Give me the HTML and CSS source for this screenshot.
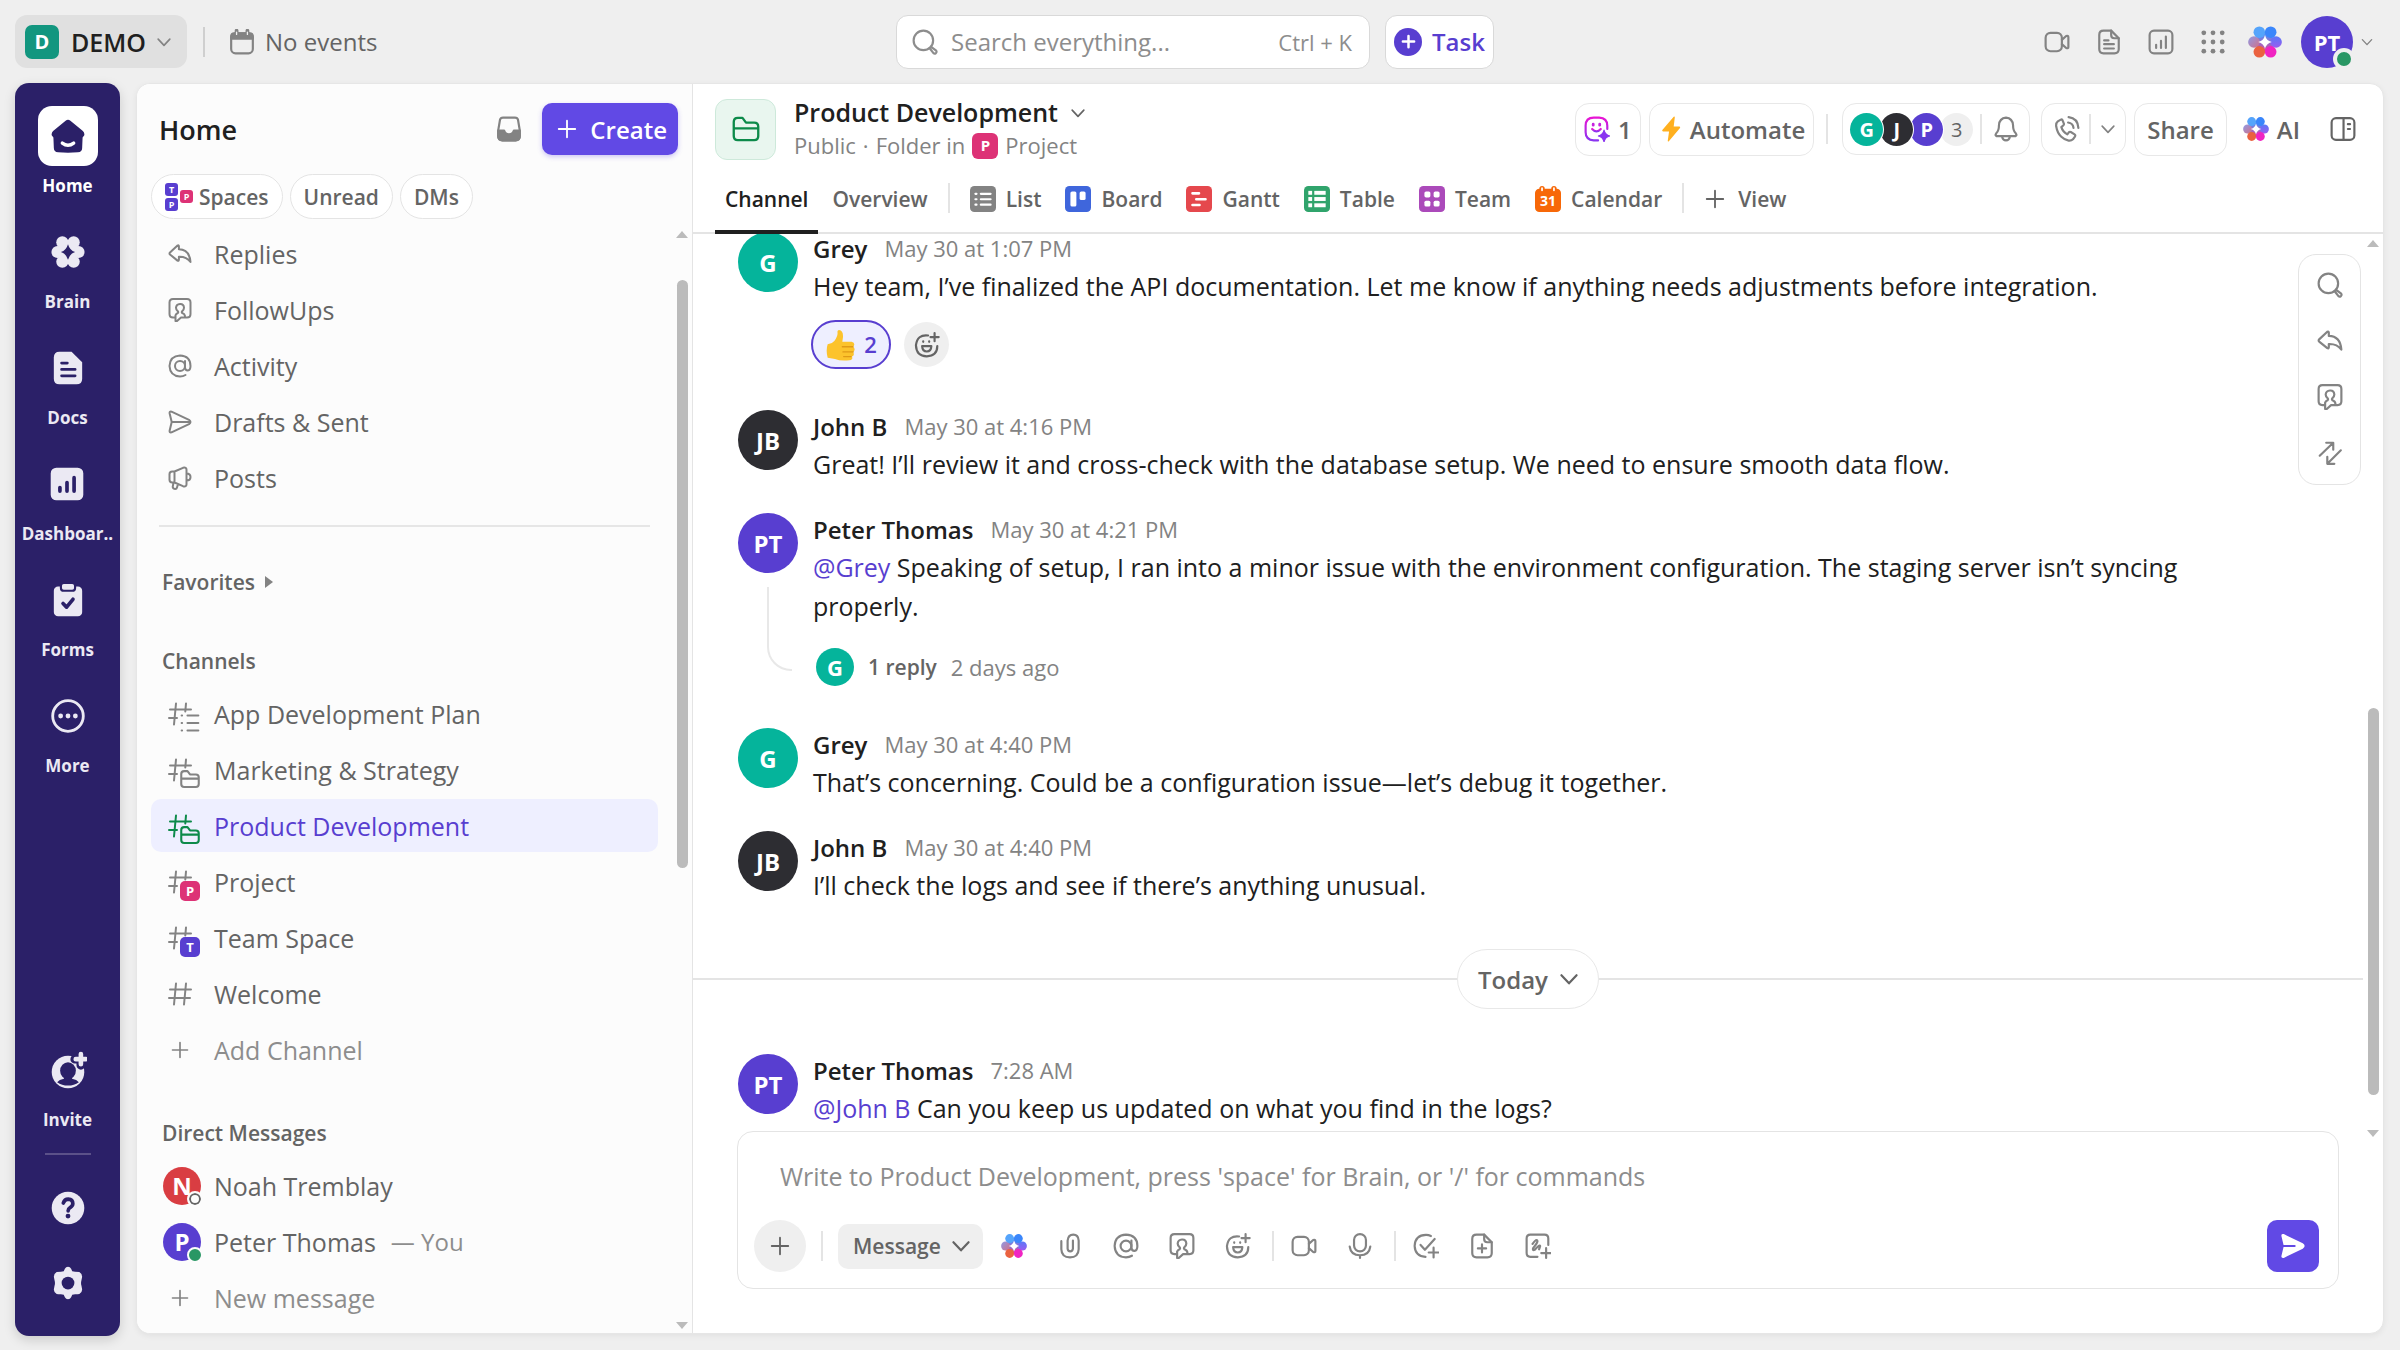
FILE: index.html
```
<!DOCTYPE html>
<html lang="en">
<head>
    <meta charset="UTF-8">
    <meta name="viewport" content="width=device-width, initial-scale=1.0">
    <title>Product Development | DEMO</title>
    <link rel="stylesheet" href="styles.css">
</head>
<body>
    <!-- Icon sprite -->
    <svg class="sprite" aria-hidden="true">
        <defs>
            <linearGradient id="agent-grad" x1="0" y1="0" x2="0" y2="1">
                <stop offset="0" stop-color="#e815d4"/>
                <stop offset="1" stop-color="#8a35f0"/>
            </linearGradient>
            <linearGradient id="petal-left" x1="0" y1="0" x2="1" y2="1">
                <stop offset="0" stop-color="#8f9be6"/>
                <stop offset="1" stop-color="#d0708a"/>
            </linearGradient>
            <linearGradient id="petal-right" x1="0" y1="0" x2="0" y2="1">
                <stop offset="0" stop-color="#5a78f8"/>
                <stop offset="1" stop-color="#9a5cf0"/>
            </linearGradient>
            <linearGradient id="petal-mid" x1="0" y1="0" x2="0" y2="1">
                <stop offset="0" stop-color="#4a95fc"/>
                <stop offset="1" stop-color="#d84a9c"/>
            </linearGradient>
        </defs>
        <symbol id="i-chevron" viewBox="0 0 24 24"><path d="M5 8.500l7 7.500 7-7.500"/></symbol>
        <symbol id="i-plus" viewBox="0 0 24 24"><path d="M12 3v18M3 12h18"/></symbol>
        <symbol id="i-calendar" viewBox="0 0 24 24"><rect x="2" y="4" width="20" height="18.500" rx="4"/><path d="M2 9V7q0-3 3-3h14q3 0 3 3v2z" fill="currentColor"/><path d="M7 1.500v4M17 1.500v4" stroke-width="3.500"/><path d="M7 3v2M17 3v2" stroke="#efefef" stroke-width="1.200"/></symbol>
        <symbol id="i-search" viewBox="0 0 24 24"><circle cx="10.500" cy="10.500" r="9"/><path d="M17 17.500l1-.8 4.300 3.300q.8 1.200-.2 2.200-1.200 1-2.300.1L16.500 18"/></symbol>
        <symbol id="i-video" viewBox="0 0 24 24"><rect x="1.500" y="3.500" width="15" height="17" rx="4.500"/><path d="M16.500 10l4-3.500q2-.8 2 1v9q0 1.800-2 1l-4-3.500"/></symbol>
        <symbol id="i-doc" viewBox="0 0 24 24"><path d="M14 1.500H7Q3 1.500 3 5.500v13q0 4 4 4h10q4 0 4-4V8.500z"/><path d="M14 1.500v4q0 3 3 3h4M7.500 10.500h4M7.500 14h9M7.500 18h9"/></symbol>
        <symbol id="i-chart" viewBox="0 0 24 24"><rect x="1.500" y="1.500" width="21" height="21" rx="4"/><path d="M7.500 14.500v3M12 11v6.500M16.500 7v10.500"/></symbol>
        <symbol id="i-dots" viewBox="0 0 24 24"><g fill="currentColor" stroke="none"><circle cx="3.500" cy="3.500" r="2.200"/><circle cx="12" cy="3.500" r="2.200"/><circle cx="20.500" cy="3.500" r="2.200"/><circle cx="3.500" cy="12" r="2.200"/><circle cx="12" cy="12" r="2.200"/><circle cx="20.500" cy="12" r="2.200"/><circle cx="3.500" cy="20.500" r="2.200"/><circle cx="12" cy="20.500" r="2.200"/><circle cx="20.500" cy="20.500" r="2.200"/></g></symbol>
        <symbol id="i-brain" viewBox="0 0 24 24"><g stroke="none"><circle cx="12" cy="12" r="6.500" fill="url(#petal-mid)"/><circle cx="4.200" cy="12" r="4.100" fill="url(#petal-left)"/><circle cx="19.800" cy="12" r="4.100" fill="url(#petal-right)"/><circle cx="8" cy="18.900" r="4.100" fill="#ea6240"/><circle cx="16" cy="18.900" r="4.100" fill="#f024c2"/><circle cx="8" cy="5.100" r="4.100" fill="#55a4fb"/><circle cx="16" cy="5.100" r="4.100" fill="#3a86fb"/><path d="M12 7q.8 4 4.800 5-4 1-4.800 5-.8-4-4.800-5 4-1 4.800-5z" fill="#fff"/></g></symbol>
        <symbol id="i-brain-solid" viewBox="0 0 24 24"><g fill="currentColor" stroke="none"><circle cx="4.600" cy="12" r="4.300"/><circle cx="19.400" cy="12" r="4.300"/><circle cx="8" cy="18.900" r="4.300"/><circle cx="16" cy="18.900" r="4.300"/><circle cx="8" cy="5.100" r="4.300"/><circle cx="16" cy="5.100" r="4.300"/><circle cx="12" cy="12" r="6.500"/><path d="M12 6.500q1.200 4.300 5 5.500-3.800 1.200-5 5.500-1.200-4.300-5-5.500 3.800-1.200 5-5.500z" fill="#2b2068"/></g></symbol>
        <symbol id="i-home" viewBox="0 0 24 24"><path d="M10.300 1.200q1.700-1.200 3.400 0l8.800 7.300q1.300 1.200 1 3l-1.200 1.500-.3 7.500q0 2.800-3 3-7 .6-14 0-3-.2-3-3L1.700 13l-1.200-1.500q-.3-1.800 1-3z" fill="currentColor" stroke="none"/><path d="M8 17q4 3 8 0" stroke="#fff" stroke-width="2.400"/></symbol>
        <symbol id="i-doc-solid" viewBox="0 0 24 24"><path d="M6 .5h8.500L22 8v11.500q0 4-4 4H6q-4 0-4-4v-15q0-4 4-4z" fill="currentColor" stroke="none"/><path d="M7.500 8.500h4M7.500 13h9.500M7.500 17.500h9.500" stroke="#2b2068"/></symbol>
        <symbol id="i-chart-solid" viewBox="0 0 24 24"><rect x=".5" y=".5" width="23" height="23" rx="4" fill="currentColor" stroke="none"/><path d="M7 14.500V17M12 11v6M17 7.500V17" stroke="#2b2068" stroke-width="2.600"/></symbol>
        <symbol id="i-form" viewBox="0 0 24 24"><rect x="2" y="2.500" width="20" height="21" rx="3" fill="currentColor" stroke="none"/><rect x="7" y="0" width="10" height="5.500" rx="2" fill="currentColor" stroke="#2b2068" stroke-width="1.500"/><path d="M8.500 14.500l2.500 2.500 4.500-5.500" stroke="#2b2068" stroke-width="2.600"/></symbol>
        <symbol id="i-more" viewBox="0 0 24 24"><circle cx="12" cy="12" r="10.800"/><g fill="currentColor" stroke="none"><circle cx="6.800" cy="12" r="1.700"/><circle cx="12" cy="12" r="1.700"/><circle cx="17.200" cy="12" r="1.700"/></g></symbol>
        <symbol id="i-invite" viewBox="0 0 28 28"><circle cx="14" cy="15.500" r="12" fill="currentColor" stroke="none"/><ellipse cx="14" cy="14.500" rx="5.800" ry="6.300" fill="#2b2068" stroke="none"/><path d="M11 18.500h6v2q3.500.5 5 2.500-3.500 2.500-8 2.500T6 23q1.500-2 5-2.500z" fill="#2b2068" stroke="none"/><path d="M23.500 1.500v9M19 6h9" stroke="#2b2068" stroke-width="6.500"/><path d="M23.500 2.200v7.600M19.700 6h7.600" stroke-width="3.400"/></symbol>
        <symbol id="i-help" viewBox="0 0 24 24"><circle cx="12" cy="12" r="11.500" fill="currentColor" stroke="none"/><path d="M8.700 8.500q.8-2.800 3.500-2.800 3.200.2 3.200 3.100 0 1.700-1.700 2.700-1.600 1-1.600 2.500" stroke="#2b2068" stroke-width="2.600"/><circle cx="12" cy="17.700" r="1.700" fill="#2b2068" stroke="none"/></symbol>
        <symbol id="i-gear" viewBox="0 0 24 24"><path d="M12 .5q1.500 0 2.200 1.500l.8 1.700 2 .3q2 0 3 .3 2 1.200 2 3.200l-.5 2.500q-.6 2 0 4l.5 2.500q0 2-2 3.200-1 .3-3 .3l-2 .3-.8 1.700Q13.500 23.500 12 23.500T9.800 22L9 20.300 7 20q-2 0-3-.3-2-1.200-2-3.200l.5-2.500q.6-2 0-4L2 7.500q0-2 2-3.200Q5 4 7 4l2-.3.800-1.700Q10.500.5 12 .5z" fill="currentColor" stroke="none"/><circle cx="12" cy="12" r="4.500" fill="#2b2068" stroke="none"/></symbol>
        <symbol id="i-inbox" viewBox="0 0 24 24"><path d="M6.500 1.500h11q2.300 0 2.800 2l1.700 10v5q0 4-4 4H6q-4 0-4-4v-5l1.700-10q.5-2 2.800-2z"/><path d="M2 13.500h5.500q1 3.500 4.500 3.500t4.500-3.500H22v5q0 4-4 4H6q-4 0-4-4z" fill="currentColor"/></symbol>
        <symbol id="i-reply" viewBox="0 0 24 24"><path d="M9.500 3.500q1.300-.8 1.400.8v3q10.600.2 11.600 12.700-4-5.500-11.600-5.200v3q-.1 1.600-1.400.8L2 12.500q-1-1 0-2z"/></symbol>
        <symbol id="i-follow" viewBox="0 0 24 24"><path d="M6.500 19.500H5q-3.500 0-3.500-3.500V4.500Q1.500 1 5 1h14q3.500 0 3.500 3.500V16q0 3.500-3.500 3.500h-6L8.500 23.500q-1 .3-1-.8v-5.500q.5-1.500 2.300-2.200.8-.8 0-1.800Q8 11.500 8 9.700 8.300 6.200 12 6t4 3.700q0 1.800-1.800 3.500-.8 1 0 1.800 2.500.8 2.800 3"/></symbol>
        <symbol id="i-at" viewBox="0 0 24 24"><circle cx="12" cy="12" r="5"/><path d="M17 7v6.500q.2 3 2.800 3 2.700-.3 2.700-4.500Q22.500 2 12 1.500 2 2 1.500 12 2 22 12 22.500q3 0 5.500-1.500"/></symbol>
        <symbol id="i-send" viewBox="0 0 24 24"><path d="M3.500 1.700L21 9.800q3 2.200 0 4.400L3.500 22.300q-2.200.5-1.900-1.500L3.700 12 1.600 3.200q-.3-2 1.900-1.500zM4 12h17"/></symbol>
        <symbol id="i-posts" viewBox="0 0 24 24"><path d="M6.500 5.500L15 1.800q3.500-1 3.500 2v14.400q0 3-3.500 2L6.500 16.500H4.200q-2.700 0-2.700-2.700V8.200q0-2.700 2.700-2.700zM6.500 5.500v11M18.500 7.500q4 0 4 3.500t-4 3.500M5.500 16.500l-.8 4.500q.5 2 2.500 2 1.500 0 1.800-1.500l1-3.500"/></symbol>
        <symbol id="i-hash" viewBox="0 0 24 24"><path d="M8 1.500L6 22.500M18 1.500l-2 21M2 7.500h21M1 16h21"/></symbol>
        <symbol id="i-hash-cut" viewBox="0 0 24 24"><path d="M8 1.500L6 22.500M18 1.500l-.7 8M2 7.500h21M1 16h8"/></symbol>
        <symbol id="i-folder" viewBox="0 0 24 24"><path d="M5 2.500h4l3 4h7q3.500 0 3.500 3.500v8q0 3.500-3.500 3.500H5Q1.500 21.500 1.500 18V6q0-3.500 3.500-3.500zM1.500 11.500h21"/></symbol>
        <symbol id="i-lines" viewBox="0 0 24 24"><path d="M2 3h.5M9 3h13M2 12h.5M9 12h13M2 21h.5M9 21h13"/></symbol>
        <symbol id="i-agent" viewBox="0 0 24 24"><g stroke="url(#agent-grad)"><path d="M13 22.500H9q-7.500-.5-7.500-7.500V9Q1.500 1.500 9 1.500h5q7.500.3 7.500 7.500v3"/><path d="M7.500 12q4 4.500 8 0" /></g><path d="M8.500 7.500v1M14.500 7.500v1" stroke="#c622e0" stroke-width="2.600"/><path d="M18.500 13q1 4.300 5.300 5.500-4.300 1-5.300 5.500-1-4.500-5.300-5.500 4.300-1.200 5.300-5.500z" fill="#8a35f0" stroke="#8a35f0" stroke-width="1"/></symbol>
        <symbol id="i-bolt" viewBox="0 0 24 24"><path d="M14.500.8L4 13q-.6 1 .6 1.200h5.600L9 22.800q0 1.200 1 .4L20.300 11q.8-1-.6-1.200h-5.200l1-8.500q0-1.200-1-.5z" fill="#ffb01f" stroke="none"/></symbol>
        <symbol id="i-bell" viewBox="0 0 24 24"><path d="M12 1.500Q6 2 5.500 8.500q0 5-2.500 7.500-1.200 1.500 0 2.500h18q1.200-1 0-2.500-2.500-2.500-2.500-7.500Q18 2 12 1.500zM8.500 19.500q.5 3 3.500 3t3.500-3"/></symbol>
        <symbol id="i-call" viewBox="0 0 24 24"><path d="M6.300 3.300L3.500 5Q1.700 6.500 2 9.500q1 6 4.500 9.500 3 3 7 3.700 2.500.3 4-1.200l1.800-2.500q.8-1.200-.3-2l-3.500-2.200q-1-.5-1.800.3L12.300 17Q8 14.500 6.800 10.300l1.900-1.800q.8-.8.3-1.800L7.800 3.800q-.6-1-1.500-.5zM13.500 1q8.500 1 9 10M13 6q4.500.5 5 5"/></symbol>
        <symbol id="i-panel" viewBox="0 0 24 24"><rect x="1.500" y="2" width="21" height="20" rx="4"/><path d="M12.500 2v20M16.500 7.500h2M16.500 12h2"/></symbol>
        <symbol id="i-emoji" viewBox="0 0 24 24"><path d="M13 3.200q-10-1.200-11.200 9 .3 10 10 10.300 9.700-.5 9.700-9.500M7.500 13h8.500q-.2 5-4.200 5t-4.300-5zM8.500 8.500v.6M14 8.500v.6M19 1v7.500M15.200 4.700h7.600"/></symbol>
        <symbol id="i-swap" viewBox="0 0 24 24"><path d="M2.500 14.500L14.500 3M8.500 2.500H15v6.500M22 9.500L10 21.500M9.500 15.500V22H16"/></symbol>
        <symbol id="i-clip" viewBox="0 0 24 24"><path d="M4 7.500V15q.3 7.500 8 7.500t8-7.500V7Q19.700 1.500 15 1.500T9.800 7v7.500q.2 2.500 2.400 2.500t2.500-2.500V7"/></symbol>
        <symbol id="i-mic" viewBox="0 0 24 24"><rect x="6.500" y="1" width="11" height="16" rx="5.500"/><path d="M2.500 12.500q1 8 9.500 8t9.500-8M12 20.500V23"/></symbol>
        <symbol id="i-task-add" viewBox="0 0 24 24"><path d="M11.500 22q-9.500-.5-10-10Q2 2 12 1.800q2.500 0 4.500 1M7 11l4 4.500L20 5.500M19 13.500v9M14.500 18h9"/></symbol>
        <symbol id="i-doc-add" viewBox="0 0 24 24"><path d="M14 1.500H7Q3 1.500 3 5.500v13q0 4 4 4h10q4 0 4-4V8.500z"/><path d="M14 1.500v4q0 3 3 3h4M12 10.500v7.500M8.200 14.200h7.600"/></symbol>
        <symbol id="i-board-add" viewBox="0 0 24 24"><path d="M11.500 22H5q-3.500 0-3.500-3.500V5Q1.500 1.500 5 1.500h13q3.500 0 3.500 3.500v6M7 10q4-5.500 4.500-2.500-.2 2-4 6.500-.7 2.500 1.500 1.500 4.500-5 5-3.500-.5 2-1 3M19.500 14v9M15 18.500h9"/></symbol>
        <symbol id="v-list" viewBox="0 0 24 24"><rect width="24" height="24" rx="4" fill="#838383" stroke="none"/><path d="M5 7.200h1M10 7.200h9M5 12.200h1M10 12.200h9M5 17.200h1M10 17.200h9" stroke="#fff"/></symbol>
        <symbol id="v-board" viewBox="0 0 24 24"><rect width="24" height="24" rx="4" fill="#3f66dc" stroke="none"/><rect x="5" y="5" width="5.500" height="14" rx="1.500" fill="#fff" stroke="none"/><rect x="13.500" y="5" width="5.500" height="8" rx="1.500" fill="#fff" stroke="none"/></symbol>
        <symbol id="v-gantt" viewBox="0 0 24 24"><rect width="24" height="24" rx="4" fill="#e5484d" stroke="none"/><path d="M6 6.800h6M9.500 12.200H18M6 17.500h6.500" stroke="#fff" stroke-width="2.400"/></symbol>
        <symbol id="v-table" viewBox="0 0 24 24"><rect width="24" height="24" rx="4" fill="#30a46c" stroke="none"/><g fill="#fff" stroke="none"><rect x="4" y="4.500" width="3.500" height="3.600"/><rect x="9.500" y="4.500" width="10.500" height="3.600"/><rect x="4" y="10.200" width="3.500" height="3.600"/><rect x="9.500" y="10.200" width="10.500" height="3.600"/><rect x="4" y="16" width="3.500" height="3.600"/><rect x="9.500" y="16" width="10.500" height="3.600"/></g></symbol>
        <symbol id="v-team" viewBox="0 0 24 24"><rect width="24" height="24" rx="4" fill="#ab4aba" stroke="none"/><g fill="#fff" stroke="none"><rect x="5" y="5" width="5.500" height="5.500" rx="1.500"/><rect x="13.500" y="5" width="5.500" height="5.500" rx="1.500"/><rect x="5" y="13.500" width="5.500" height="5.500" rx="1.500"/><rect x="13.500" y="13.500" width="5.500" height="5.500" rx="1.500"/></g></symbol>
        <symbol id="v-calendar" viewBox="0 0 24 24"><rect y="2.500" width="24" height="21.500" rx="4" fill="#f76808" stroke="none"/><path d="M6.500 2.500v2M17.500 2.500v2" stroke="#f76808" stroke-width="5"/><path d="M6.500 2v2M17.500 2v2" stroke="#fff" stroke-width="1.600"/></symbol>
        <symbol id="i-thumb" viewBox="0 0 24 24"><g stroke="none"><path d="M10.500.8q3.200.2 3 5.200l-.5 3.500h7q2 .3 2 2.200-.1 1.100-1 1.600 1.300.7 1.200 2.200-.2 1.300-1.300 1.700.9.700.7 1.900-.3 1.300-1.500 1.600.6.700.3 1.600-.6 1.200-2.200 1.200-7 .6-10.700-1L2 21.500Q.5 16 2 11.500q3.500-.5 5-2.500 3-4.200 2.300-7 .2-1.200 1.200-1.200z" fill="#fcc32c"/><path d="M13 13.300h8M13.500 17.200h7.700M14 20.700h5.500" stroke="#e09a16" stroke-width="1"/></g></symbol>
    </svg>

    <!-- Top bar -->
    <header class="topbar">
        <div class="topbar-left">
            <button class="workspace" type="button">
                <span class="square square-teal">D</span>
                DEMO
                <svg class="icon icon-sm"><use href="#i-chevron"/></svg>
            </button>
            <span class="vline"></span>
            <a class="events" href="#"><svg class="icon"><use href="#i-calendar"/></svg>No events</a>
        </div>
        <div class="topbar-center">
            <label class="search">
                <svg class="icon"><use href="#i-search"/></svg>
                <input type="text" placeholder="Search everything..." aria-label="Search everything">
                <kbd>Ctrl + K</kbd>
            </label>
            <button class="task-btn" type="button"><span class="task-plus"><svg class="icon"><use href="#i-plus"/></svg></span>Task</button>
        </div>
        <div class="topbar-right">
            <button class="icon-btn" type="button" aria-label="Clips"><svg class="icon"><use href="#i-video"/></svg></button>
            <button class="icon-btn" type="button" aria-label="Notepad"><svg class="icon"><use href="#i-doc"/></svg></button>
            <button class="icon-btn" type="button" aria-label="Reports"><svg class="icon"><use href="#i-chart"/></svg></button>
            <button class="icon-btn" type="button" aria-label="Apps"><svg class="icon"><use href="#i-dots"/></svg></button>
            <button class="icon-btn" type="button" aria-label="Brain"><svg class="icon icon-xl"><use href="#i-brain"/></svg></button>
            <button class="profile" type="button">
                <span class="avatar avatar-top purple">PT<i class="status online"></i></span>
                <svg class="icon icon-xs"><use href="#i-chevron"/></svg>
            </button>
        </div>
    </header>

    <div class="layout">
        <!-- Icon rail -->
        <nav class="rail">
            <a class="rail-item current" href="#"><span class="rail-icon"><svg class="icon"><use href="#i-home"/></svg></span>Home</a>
            <a class="rail-item" href="#"><span class="rail-icon"><svg class="icon"><use href="#i-brain-solid"/></svg></span>Brain</a>
            <a class="rail-item" href="#"><span class="rail-icon"><svg class="icon"><use href="#i-doc-solid"/></svg></span>Docs</a>
            <a class="rail-item" href="#"><span class="rail-icon"><svg class="icon"><use href="#i-chart-solid"/></svg></span>Dashboar..</a>
            <a class="rail-item" href="#"><span class="rail-icon"><svg class="icon"><use href="#i-form"/></svg></span>Forms</a>
            <a class="rail-item" href="#"><span class="rail-icon"><svg class="icon"><use href="#i-more"/></svg></span>More</a>
            <div class="rail-bottom">
                <a class="rail-item" href="#"><span class="rail-icon"><svg class="icon icon-invite"><use href="#i-invite"/></svg></span>Invite</a>
                <span class="rail-line"></span>
                <a class="rail-link" href="#" aria-label="Help"><svg class="icon"><use href="#i-help"/></svg></a>
                <a class="rail-link" href="#" aria-label="Settings"><svg class="icon"><use href="#i-gear"/></svg></a>
            </div>
        </nav>

        <div class="panel">
            <!-- Sidebar -->
            <aside class="sidebar">
                <div class="sidebar-head">
                    <h1>Home</h1>
                    <button class="icon-btn" type="button" aria-label="Inbox"><svg class="icon"><use href="#i-inbox"/></svg></button>
                    <button class="create-btn" type="button"><svg class="icon"><use href="#i-plus"/></svg>Create</button>
                </div>
                <div class="pills">
                    <button class="pill" type="button">
                        <span class="space-tiles"><i class="tile purple">T</i><i class="tile pink">P</i><i class="tile purple">P</i></span>
                        Spaces
                    </button>
                    <button class="pill" type="button">Unread</button>
                    <button class="pill" type="button">DMs</button>
                </div>
                <div class="sidebar-scroll">
                    <div class="sidebar-content">
                        <nav class="rows">
                            <a class="row" href="#"><span class="row-icon"><svg class="icon"><use href="#i-reply"/></svg></span>Replies</a>
                            <a class="row" href="#"><span class="row-icon"><svg class="icon"><use href="#i-follow"/></svg></span>FollowUps</a>
                            <a class="row" href="#"><span class="row-icon"><svg class="icon"><use href="#i-at"/></svg></span>Activity</a>
                            <a class="row" href="#"><span class="row-icon"><svg class="icon"><use href="#i-send"/></svg></span>Drafts &amp; Sent</a>
                            <a class="row" href="#"><span class="row-icon"><svg class="icon"><use href="#i-posts"/></svg></span>Posts</a>
                        </nav>
                        <hr>
                        <h2 class="group">Favorites <i class="caret"></i></h2>

                        <h2 class="group">Channels</h2>
                        <nav class="rows">
                            <a class="row" href="#"><span class="row-icon"><svg class="icon"><use href="#i-hash-cut"/></svg><svg class="icon corner"><use href="#i-lines"/></svg></span>App Development Plan</a>
                            <a class="row" href="#"><span class="row-icon"><svg class="icon"><use href="#i-hash-cut"/></svg><svg class="icon corner"><use href="#i-folder"/></svg></span>Marketing &amp; Strategy</a>
                            <a class="row active" href="#"><span class="row-icon green-icon"><svg class="icon"><use href="#i-hash-cut"/></svg><svg class="icon corner"><use href="#i-folder"/></svg></span>Product Development</a>
                            <a class="row" href="#"><span class="row-icon"><svg class="icon"><use href="#i-hash-cut"/></svg><i class="corner badge pink">P</i></span>Project</a>
                            <a class="row" href="#"><span class="row-icon"><svg class="icon"><use href="#i-hash-cut"/></svg><i class="corner badge purple">T</i></span>Team Space</a>
                            <a class="row" href="#"><span class="row-icon"><svg class="icon"><use href="#i-hash"/></svg></span>Welcome</a>
                            <a class="row muted" href="#"><span class="row-icon"><svg class="icon icon-sm"><use href="#i-plus"/></svg></span>Add Channel</a>
                        </nav>

                        <h2 class="group">Direct Messages</h2>
                        <nav class="rows">
                            <a class="row" href="#"><span class="row-icon"><span class="avatar avatar-sm red">N<i class="status offline"></i></span></span>Noah Tremblay</a>
                            <a class="row" href="#"><span class="row-icon"><span class="avatar avatar-sm purple">P<i class="status online"></i></span></span>Peter Thomas <span class="you">— You</span></a>
                            <a class="row muted" href="#"><span class="row-icon"><svg class="icon icon-sm"><use href="#i-plus"/></svg></span>New message</a>
                        </nav>
                    </div>
                    <div class="scrollbar scrollbar-side">
                        <i class="arrow-up"></i>
                        <i class="before"></i>
                        <i class="thumb"></i>
                        <i class="after"></i>
                        <i class="arrow-down"></i>
                    </div>
                </div>
            </aside>

            <!-- Channel -->
            <main class="channel">
                <header class="channel-head">
                    <span class="folder-tile"><svg class="icon"><use href="#i-folder"/></svg></span>
                    <div class="channel-title">
                        <h2>Product Development <svg class="icon icon-sm"><use href="#i-chevron"/></svg></h2>
                        <p>Public <span class="dot">·</span> Folder in <i class="square square-pink">P</i> <a href="#">Project</a></p>
                    </div>
                    <div class="channel-tools">
                        <button class="tool" type="button"><svg class="icon"><use href="#i-agent"/></svg>1</button>
                        <button class="tool" type="button"><svg class="icon icon-bolt"><use href="#i-bolt"/></svg>Automate</button>
                        <span class="vline"></span>
                        <div class="tool-group people">
                            <button class="stack" type="button">
                                <span class="avatar avatar-md teal">G</span>
                                <span class="avatar avatar-md dark">J</span>
                                <span class="avatar avatar-md purple">P</span>
                                <span class="avatar avatar-md count">3</span>
                            </button>
                            <span class="vline"></span>
                            <button type="button" aria-label="Notifications"><svg class="icon"><use href="#i-bell"/></svg></button>
                        </div>
                        <div class="tool-group call">
                            <button type="button" aria-label="Call"><svg class="icon"><use href="#i-call"/></svg></button>
                            <span class="vline"></span>
                            <button type="button" aria-label="Call options"><svg class="icon icon-sm"><use href="#i-chevron"/></svg></button>
                        </div>
                        <button class="tool share" type="button">Share</button>
                        <button class="tool plain" type="button"><svg class="icon"><use href="#i-brain"/></svg>AI</button>
                        <button class="tool plain" type="button" aria-label="Side panel"><svg class="icon"><use href="#i-panel"/></svg></button>
                    </div>
                </header>

                <nav class="tabs">
                    <a class="tab selected" href="#">Channel</a>
                    <a class="tab" href="#">Overview</a>
                    <span class="vline"></span>
                    <a class="tab" href="#"><svg class="icon"><use href="#v-list"/></svg>List</a>
                    <a class="tab" href="#"><svg class="icon"><use href="#v-board"/></svg>Board</a>
                    <a class="tab" href="#"><svg class="icon"><use href="#v-gantt"/></svg>Gantt</a>
                    <a class="tab" href="#"><svg class="icon"><use href="#v-table"/></svg>Table</a>
                    <a class="tab" href="#"><svg class="icon"><use href="#v-team"/></svg>Team</a>
                    <a class="tab" href="#"><span class="day"><svg class="icon"><use href="#v-calendar"/></svg><i>31</i></span>Calendar</a>
                    <span class="vline"></span>
                    <a class="tab" href="#"><svg class="icon"><use href="#i-plus"/></svg>View</a>
                </nav>

                <div class="feed">
                    <section class="messages">
                        <article class="message">
                            <span class="avatar teal">G</span>
                            <div class="message-body">
                                <h3>Grey <time>May 30 at 1:07 PM</time></h3>
                                <p>Hey team, I’ve finalized the API documentation. Let me know if anything needs adjustments before integration.</p>
                                <div class="reactions">
                                    <button class="reaction" type="button"><svg class="icon icon-xl"><use href="#i-thumb"/></svg>2</button>
                                    <button class="add-reaction" type="button" aria-label="Add reaction"><svg class="icon"><use href="#i-emoji"/></svg></button>
                                </div>
                            </div>
                        </article>
                        <article class="message">
                            <span class="avatar dark">JB</span>
                            <div class="message-body">
                                <h3>John B <time>May 30 at 4:16 PM</time></h3>
                                <p>Great! I’ll review it and cross-check with the database setup. We need to ensure smooth data flow.</p>
                            </div>
                        </article>
                        <article class="message">
                            <div class="thread-side">
                                <span class="avatar purple">PT</span>
                                <i class="thread-line"></i>
                            </div>
                            <div class="message-body">
                                <h3>Peter Thomas <time>May 30 at 4:21 PM</time></h3>
                                <p><a href="#">@Grey</a> Speaking of setup, I ran into a minor issue with the environment configuration. The staging server isn’t syncing properly.</p>
                                <button class="thread" type="button"><span class="avatar avatar-sm teal">G</span><b>1 reply</b> 2 days ago</button>
                            </div>
                        </article>
                        <article class="message">
                            <span class="avatar teal">G</span>
                            <div class="message-body">
                                <h3>Grey <time>May 30 at 4:40 PM</time></h3>
                                <p>That’s concerning. Could be a configuration issue—let’s debug it together.</p>
                            </div>
                        </article>
                        <article class="message">
                            <span class="avatar dark">JB</span>
                            <div class="message-body">
                                <h3>John B <time>May 30 at 4:40 PM</time></h3>
                                <p>I’ll check the logs and see if there’s anything unusual.</p>
                            </div>
                        </article>
                        <div class="day-divider">
                            <button type="button">Today <svg class="icon"><use href="#i-chevron"/></svg></button>
                        </div>
                        <article class="message">
                            <span class="avatar purple">PT</span>
                            <div class="message-body">
                                <h3>Peter Thomas <time>7:28 AM</time></h3>
                                <p><a href="#">@John B</a> Can you keep us updated on what you find in the logs?</p>
                            </div>
                        </article>
                    </section>
                    <div class="scrollbar scrollbar-feed">
                        <i class="arrow-up"></i>
                        <i class="before"></i>
                        <i class="thumb"></i>
                        <i class="after"></i>
                        <i class="arrow-down"></i>
                    </div>
                    <div class="float-tools">
                        <button type="button" aria-label="Search"><svg class="icon"><use href="#i-search"/></svg></button>
                        <button type="button" aria-label="Replies"><svg class="icon"><use href="#i-reply"/></svg></button>
                        <button type="button" aria-label="FollowUps"><svg class="icon"><use href="#i-follow"/></svg></button>
                        <button type="button" aria-label="Sync"><svg class="icon"><use href="#i-swap"/></svg></button>
                    </div>
                </div>

                <form class="composer">
                    <textarea rows="1" aria-label="Message text" placeholder="Write to Product Development, press 'space' for Brain, or '/' for commands"></textarea>
                    <div class="composer-bar">
                        <button class="round" type="button" aria-label="Add"><svg class="icon"><use href="#i-plus"/></svg></button>
                        <span class="vline"></span>
                        <label class="type-select">
                            <select aria-label="Message type"><option>Message</option></select>
                            <svg class="icon"><use href="#i-chevron"/></svg>
                        </label>
                        <button class="icon-btn" type="button" aria-label="Brain"><svg class="icon"><use href="#i-brain"/></svg></button>
                        <button class="icon-btn" type="button" aria-label="Attach"><svg class="icon"><use href="#i-clip"/></svg></button>
                        <button class="icon-btn" type="button" aria-label="Mention"><svg class="icon"><use href="#i-at"/></svg></button>
                        <button class="icon-btn" type="button" aria-label="FollowUp"><svg class="icon"><use href="#i-follow"/></svg></button>
                        <button class="icon-btn" type="button" aria-label="Emoji"><svg class="icon"><use href="#i-emoji"/></svg></button>
                        <span class="vline"></span>
                        <button class="icon-btn" type="button" aria-label="Video"><svg class="icon"><use href="#i-video"/></svg></button>
                        <button class="icon-btn" type="button" aria-label="Voice"><svg class="icon"><use href="#i-mic"/></svg></button>
                        <span class="vline"></span>
                        <button class="icon-btn" type="button" aria-label="New task"><svg class="icon"><use href="#i-task-add"/></svg></button>
                        <button class="icon-btn" type="button" aria-label="New doc"><svg class="icon"><use href="#i-doc-add"/></svg></button>
                        <button class="icon-btn" type="button" aria-label="New whiteboard"><svg class="icon"><use href="#i-board-add"/></svg></button>
                        <button class="send" type="submit" aria-label="Send"><svg class="icon" viewBox="0 0 24 24"><path d="M3.500 1L21 9.500q3.500 2.500 0 5L3.500 23q-2.500.5-2.200-1.700L3.500 12 1.300 2.700Q1 .5 3.500 1z" fill="#fff" stroke="none"/><path d="M3 12h10.500" stroke="#6149e5"/></svg></button>
                    </div>
                </form>
            </main>
        </div>
    </div>
</body>
</html>
```
FILE: styles.css
```
* {
    margin: 0;
    padding: 0;
    box-sizing: border-box;
}

body {
    font-family: 'Open Sans', 'Noto Sans', sans-serif;
    font-size: 24px;
    color: #202020;
    background: #efefef;
    height: 100vh;
    display: flex;
    flex-direction: column;
    overflow: hidden;
}

button,
input,
select,
textarea {
    font: inherit;
    color: inherit;
    background: none;
    border: none;
    outline: none;
}

button {
    cursor: pointer;
    display: flex;
    align-items: center;
    justify-content: center;
    white-space: nowrap;
}

a {
    color: inherit;
    text-decoration: none;
}

i {
    font-style: normal;
}

/* Icons */
.sprite {
    position: absolute;
    width: 0;
    height: 0;
}

.icon {
    width: 26px;
    height: 26px;
    flex: none;
    display: block;
    fill: none;
    stroke: currentColor;
    stroke-width: 2;
    stroke-linecap: round;
    stroke-linejoin: round;
    overflow: visible;
}

.icon-xs { width: 16px; height: 16px; }
.icon-sm { width: 20px; height: 20px; }
.icon-xl { width: 32px; height: 32px; }

.icon-btn {
    color: #838383;
    height: 52px;
}

.vline {
    width: 2px;
    height: 30px;
    background: #e4e4e4;
    flex: none;
}

/* Colours for avatars and space tiles */
.teal { background: #05b49b; }
.dark { background: #2d2d32; }
.purple { background: #583ed0; }
.pink { background: #dd3276; }
.red { background: #d93d42; }

.avatar {
    width: 60px;
    height: 60px;
    border-radius: 50%;
    flex: none;
    display: flex;
    align-items: center;
    justify-content: center;
    color: #fff;
    font-weight: 700;
    position: relative;
}

.avatar-top { width: 52px; height: 52px; font-size: 22px; }
.avatar-md { width: 33px; height: 33px; font-size: 20px; }
.avatar-sm { width: 38px; height: 38px; }

.status {
    position: absolute;
    right: -2px;
    bottom: -2px;
    width: 16px;
    height: 16px;
    border: 2px solid #fcfcfc;
    border-radius: 50%;
}

.avatar-top .status {
    width: 22px;
    height: 22px;
    border: 4px solid #efefef;
}

.online { background: #299764; }

.offline {
    background: #fcfcfc;
    box-shadow: inset 0 0 0 2px #646464;
}

.square {
    display: inline-flex;
    align-items: center;
    justify-content: center;
    color: #fff;
    font-weight: 700;
    flex: none;
}

.square-teal {
    width: 34px;
    height: 34px;
    border-radius: 7px;
    background: #12967f;
    font-size: 20px;
}

.square-pink {
    width: 26px;
    height: 26px;
    border-radius: 6px;
    background: #dd3276;
    font-size: 15px;
}

/* Top bar */
.topbar {
    display: grid;
    grid-template-columns: 1fr auto 1fr;
    align-items: center;
    height: 83px;
    flex: none;
    padding: 0 25px 0 15px;
}

.topbar-left,
.topbar-center,
.topbar-right {
    display: flex;
    align-items: center;
}

.topbar-left {
    gap: 16px;
}

.topbar-left .vline {
    background: #cfcfcf;
}

.workspace {
    height: 53px;
    padding: 0 13px 0 10px;
    gap: 12px;
    background: #e0e0e0;
    border-radius: 12px;
    font-size: 25px;
    font-weight: 600;
}

.workspace .icon {
    color: #838383;
    margin-left: -4px;
}

.events {
    display: flex;
    align-items: center;
    gap: 10px;
    margin-left: 8px;
    color: #646464;
}

.events .icon {
    color: #838383;
}

.topbar-center {
    gap: 15px;
}

.search {
    width: 474px;
    height: 54px;
    display: flex;
    align-items: center;
    gap: 13px;
    padding: 0 17px 0 15px;
    background: #fff;
    border: 1px solid #d9d9d9;
    border-radius: 12px;
    color: #8d8d8d;
}

.search input {
    flex: 1;
    min-width: 0;
}

::placeholder {
    color: #8d8d8d;
    opacity: 1;
}

.search kbd {
    font-family: inherit;
    font-size: 22px;
}

.task-btn {
    height: 54px;
    padding: 0 8px;
    gap: 10px;
    background: #fff;
    border: 1px solid #d9d9d9;
    border-radius: 12px;
    color: #583ed0;
    font-weight: 600;
}

.task-plus {
    width: 28px;
    height: 28px;
    border-radius: 50%;
    background: #583ed0;
    color: #fff;
    display: flex;
    align-items: center;
    justify-content: center;
}

.task-plus .icon {
    width: 15px;
    height: 15px;
    stroke-width: 4;
}

.topbar-right {
    justify-content: flex-end;
    gap: 26px;
}

.topbar-right .icon-btn:nth-child(4) {
    margin-right: -4px;
}

.topbar-right .icon-xl {
    width: 34px;
    height: 34px;
}

.profile {
    gap: 6px;
    margin-left: -7px;
    color: #838383;
}

/* Layout */
.layout {
    flex: 1;
    min-height: 0;
    display: flex;
    gap: 16px;
    padding: 0 16px 14px 15px;
}

.rail {
    width: 105px;
    flex: none;
    display: flex;
    flex-direction: column;
    align-items: center;
    padding: 23px 0 16px;
    background: #2b2068;
    border-radius: 14px;
    box-shadow: 0 4px 12px rgba(0, 0, 0, 0.15);
    color: #ebe9f3;
    font-size: 17px;
    font-weight: 700;
}

.rail-item {
    display: flex;
    flex-direction: column;
    align-items: center;
    gap: 6px;
    height: 116px;
    line-height: 28px;
    white-space: nowrap;
}

.rail-icon {
    width: 60px;
    height: 60px;
    border-radius: 14px;
    display: flex;
    align-items: center;
    justify-content: center;
}

.rail .icon {
    width: 34px;
    height: 34px;
}

.rail .icon-invite {
    width: 38px;
    height: 38px;
}

.current {
    color: #fff;
}

.current .rail-icon {
    background: #fff;
    color: #2b2068;
}

.rail-bottom {
    margin-top: auto;
    display: flex;
    flex-direction: column;
    align-items: center;
}

.rail-line {
    width: 46px;
    height: 2px;
    margin-bottom: 15px;
    background: #5b5189;
}

.rail-link {
    height: 75px;
    display: flex;
    align-items: center;
}

.rail-bottom .rail-item {
    height: 113px;
}

.panel {
    flex: 1;
    min-width: 0;
    display: flex;
    margin-bottom: 2px;
    background: #fff;
    border: 1px solid #e6e6e6;
    border-radius: 14px;
    box-shadow: 0 2px 6px rgba(0, 0, 0, 0.06);
    overflow: hidden;
}

/* Sidebar */
.sidebar {
    width: 556px;
    flex: none;
    display: flex;
    flex-direction: column;
    background: #fcfcfc;
    border-right: 1px solid #e4e4e4;
    padding-top: 19px;
}

.sidebar-head {
    display: flex;
    align-items: center;
    padding: 0 14px 0 22px;
}

.sidebar-head h1 {
    flex: 1;
    font-size: 27px;
    font-weight: 600;
}

.create-btn {
    height: 52px;
    margin-left: 20px;
    padding: 0 11px 0 14px;
    gap: 12px;
    background: #6149e5;
    border-radius: 10px;
    color: #fff;
    font-weight: 600;
    box-shadow: 0 2px 5px rgba(97, 73, 229, 0.3);
}

.create-btn .icon {
    width: 22px;
    height: 22px;
}

.pills {
    display: flex;
    gap: 7px;
    padding: 19px 14px 8px;
}

.pill {
    height: 45px;
    padding: 0 13px;
    gap: 6px;
    background: #fff;
    border: 1px solid #e4e4e4;
    border-radius: 23px;
    color: #646464;
    font-size: 21px;
    font-weight: 600;
}

.space-tiles {
    display: grid;
    grid-template-columns: 13px 13px;
    grid-template-rows: 13px 13px;
    gap: 2px;
}

.tile {
    border-radius: 3px;
    color: #fff;
    font-size: 9px;
    font-weight: 700;
    line-height: 13px;
}

.tile:nth-child(2) {
    grid-column: 2;
    grid-row: 1 / 3;
    align-self: center;
}

.sidebar-scroll {
    flex: 1;
    min-height: 0;
    display: flex;
}

.sidebar-content {
    flex: 1;
    padding: 0 14px;
    overflow: hidden;
}

.rows {
    display: flex;
    flex-direction: column;
    gap: 3px;
}

.row {
    height: 53px;
    flex: none;
    display: flex;
    align-items: center;
    gap: 21px;
    padding-left: 16px;
    border-radius: 10px;
    color: #646464;
    font-size: 25px;
}

.row-icon {
    position: relative;
    width: 26px;
    height: 26px;
    display: flex;
    align-items: center;
    justify-content: center;
    color: #838383;
}

.green-icon {
    color: #0d8a4a;
}

.row-icon .avatar-sm {
    margin-left: 4px;
    font-size: 24px;
}

.row-icon > .icon:first-child:not(.icon-sm) {
    width: 24px;
    height: 24px;
}

.row-icon .corner {
    position: absolute;
    left: 13px;
    top: 12px;
    width: 20px;
    height: 20px;
    stroke-width: 2.5;
}

.badge {
    border-radius: 5px;
    color: #fff;
    font-size: 13px;
    font-weight: 700;
    line-height: 20px;
    text-align: center;
}

.active {
    background: #eeefff;
    color: #583ed0;
}

.muted {
    color: #8d8d8d;
}

.you {
    margin-left: -6px;
    color: #8d8d8d;
    font-size: 24px;
}

hr {
    margin: 21px 8px -2px 8px;
    border: none;
    border-top: 2px solid #e6e6e6;
}

.group {
    display: flex;
    align-items: center;
    gap: 10px;
    height: 44px;
    margin: 35px 0 4px 11px;
    color: #646464;
    font-size: 21px;
    font-weight: 600;
}

.caret {
    border-left: 8px solid #838383;
    border-top: 6px solid transparent;
    border-bottom: 6px solid transparent;
}

/* Scrollbars */
.scrollbar {
    width: 20px;
    flex: none;
    display: flex;
    flex-direction: column;
    align-items: center;
    padding: 4px 0;
}

.arrow-up,
.arrow-down {
    border: 6px solid transparent;
}

.arrow-up {
    border-top: none;
    border-bottom: 7px solid #bbb;
}

.arrow-down {
    border-bottom: none;
    border-top: 7px solid #bbb;
}

.thumb {
    width: 11px;
    border-radius: 6px;
    background: #bbb;
}

.scrollbar-side .before { flex: 42; }
.scrollbar-side .thumb { flex: 586; }
.scrollbar-side .after { flex: 453; }

.scrollbar-feed .before { flex: 462; }
.scrollbar-feed .thumb { flex: 387; }
.scrollbar-feed .after { flex: 35; }

/* Channel header */
.channel {
    flex: 1;
    min-width: 0;
    display: flex;
    flex-direction: column;
}

.channel-head {
    display: flex;
    align-items: center;
    padding: 12px 22px 0;
}

.folder-tile {
    width: 61px;
    height: 61px;
    flex: none;
    display: flex;
    align-items: center;
    justify-content: center;
    background: #e9f6ef;
    border: 1px solid #cde9da;
    border-radius: 12px;
    color: #0d8a4a;
}

.folder-tile .icon {
    width: 28px;
    height: 28px;
}

.channel-title {
    flex: 1;
    margin-left: 18px;
    line-height: 33px;
}

.channel-title h2 {
    display: flex;
    align-items: center;
    gap: 10px;
    font-size: 25px;
    font-weight: 600;
}

.channel-title h2 .icon {
    color: #646464;
}

.channel-title p {
    display: flex;
    align-items: center;
    gap: 7px;
    color: #838383;
    font-size: 22px;
}

.channel-title a {
    font-weight: 500;
}

.channel-tools {
    display: flex;
    align-items: center;
    gap: 8px;
    color: #646464;
    font-weight: 600;
}

.tool {
    height: 53px;
    padding: 0 8px;
    gap: 8px;
    border: 1px solid #e8e8e8;
    border-radius: 14px;
}

.tool:nth-child(2) {
    gap: 6px;
    padding-right: 8px;
}

.tool .icon-bolt {
    width: 26px;
    height: 30px;
}

.channel-tools > .vline {
    margin: 0 6px 0 4px;
}

.tool-group {
    height: 52px;
    display: flex;
    align-items: center;
    border: 1px solid #e8e8e8;
    border-radius: 14px;
    color: #838383;
}

.people {
    padding: 0 10px 0 7px;
    gap: 11px;
    margin-right: 3px;
}

.stack .avatar + .avatar {
    margin-left: -3px;
}

.stack .avatar {
    box-shadow: 0 0 0 1px #fff;
}

.stack .avatar:nth-child(1) { z-index: 3; }
.stack .avatar:nth-child(2) { z-index: 2; }
.stack .avatar:nth-child(3) { z-index: 1; }

.stack .count {
    background: #efefef;
    color: #646464;
    font-weight: 400;
}

.people .stack {
    margin-right: -4px;
}

.call {
    padding: 0 7px 0 12px;
    gap: 9px;
}

.call .vline {
    margin-right: -2px;
}

.share {
    padding: 0 12px;
}

.plain {
    border: none;
    padding: 0 7px 0 8px;
    gap: 8px;
}

.plain:last-child {
    padding: 0 5px 0 15px;
}

.tabs {
    display: flex;
    align-items: center;
    gap: 4px;
    height: 72px;
    flex: none;
    padding: 0 22px;
    box-shadow: inset 0 -2px #e4e4e4;
    font-size: 21px;
    font-weight: 600;
    color: #646464;
}

.tab {
    display: flex;
    align-items: center;
    gap: 10px;
    height: 72px;
    padding: 2px 10px 0;
}

.tab:last-child {
    gap: 12px;
}

.tab:last-child .icon {
    width: 22px;
    height: 22px;
}

.selected {
    color: #202020;
    box-shadow: inset 0 -4px #202020;
}

.tabs .vline {
    margin: 0 6px;
}

/* the date number sits on the calendar icon */
.day {
    position: relative;
}

.day i {
    position: absolute;
    inset: 6px 0 0;
    color: #fff;
    font-size: 14px;
    font-weight: 700;
    line-height: 18px;
    text-align: center;
}

/* Messages */
.feed {
    flex: 1;
    min-height: 0;
    display: flex;
    position: relative;
}

.messages {
    flex: 1;
    min-width: 0;
    display: flex;
    flex-direction: column;
    justify-content: flex-end;
    gap: 26px;
    padding-bottom: 3px;
    overflow: hidden;
}

.message {
    display: flex;
    gap: 15px;
    flex: none;
    padding: 0 90px 0 45px;
}

.message > .avatar,
.thread-side {
    margin-top: 3px;
}

.message-body {
    flex: 1;
    min-width: 0;
    line-height: 39px;
    font-size: 25px;
}

.message-body h3 {
    display: flex;
    align-items: center;
    gap: 17px;
    height: 38px;
    font-size: 24px;
    font-weight: 600;
}

.message-body time {
    color: #838383;
    font-size: 22px;
    font-weight: 400;
}

.message-body a {
    color: #583ed0;
}

.reactions {
    display: flex;
    align-items: center;
    gap: 13px;
    margin: 14px 0 12px -2px;
}

.reaction {
    width: 80px;
    height: 49px;
    gap: 7px;
    background: #eeefff;
    border: 2px solid #583ed0;
    border-radius: 25px;
    color: #583ed0;
    font-size: 22px;
    font-weight: 600;
}

.add-reaction {
    width: 45px;
    height: 45px;
    background: #efefef;
    border-radius: 50%;
    color: #646464;
}

.thread-side {
    display: flex;
    flex-direction: column;
    width: 60px;
    flex: none;
}

.thread-line {
    width: 25px;
    height: 84px;
    margin: 14px 0 0 29px;
    border-left: 2px solid #e8e8e8;
    border-bottom: 2px solid #e8e8e8;
    border-bottom-left-radius: 24px;
}

.thread {
    margin: 22px 0 13px 3px;
    height: 38px;
    gap: 14px;
    color: #838383;
    font-size: 22px;
}

.thread .avatar {
    font-size: 22px;
}

.thread b {
    font-size: 21px;
    font-weight: 600;
    color: #646464;
}

.day-divider {
    display: flex;
    align-items: center;
    flex: none;
    margin: 18px 0 16px;
}

.day-divider::before,
.day-divider::after {
    content: '';
    flex: 1;
    height: 2px;
    background: #e4e4e4;
}

.day-divider button {
    height: 60px;
    padding: 0 16px 0 20px;
    gap: 8px;
    border: 1px solid #e8e8e8;
    border-radius: 30px;
    color: #646464;
    font-weight: 600;
}

.scrollbar-feed {
    padding: 6px 0 0;
    margin-bottom: -6px;
}

.float-tools {
    position: absolute;
    top: 20px;
    right: 22px;
    width: 63px;
    display: flex;
    flex-direction: column;
    padding: 2px 0 3px;
    background: #fff;
    border: 1px solid #e4e4e4;
    border-radius: 18px;
    color: #838383;
}

.float-tools button {
    height: 56px;
}

/* Composer */
.composer {
    margin: 0 44px 44px 44px;
    height: 158px;
    flex: none;
    display: flex;
    flex-direction: column;
    justify-content: space-between;
    padding: 25px 19px 16px 16px;
    border: 1px solid #e4e4e4;
    border-radius: 16px;
}

.composer textarea {
    margin-left: 26px;
    height: 38px;
    line-height: 38px;
    font-size: 25px;
    resize: none;
    overflow: hidden;
}

.composer-bar {
    display: flex;
    align-items: center;
    gap: 30px;
}

.round {
    width: 52px;
    height: 52px;
    border-radius: 50%;
    background: #efefef;
    color: #646464;
}

.round .icon {
    width: 22px;
    height: 22px;
}

.composer-bar .vline {
    margin: 0 -13px 0 -9px;
}

.composer-bar .round + .vline {
    margin: 0 -15px;
}

.type-select {
    display: flex;
    align-items: center;
    gap: 7px;
    height: 45px;
    margin-right: -12px;
    padding: 0 9px 0 15px;
    background: #efefef;
    border-radius: 10px;
    color: #646464;
    font-size: 21px;
    font-weight: 600;
}

.type-select select {
    appearance: none;
}

.send {
    width: 52px;
    height: 52px;
    margin-left: auto;
    border-radius: 10px;
    background: #6149e5;
}
```
